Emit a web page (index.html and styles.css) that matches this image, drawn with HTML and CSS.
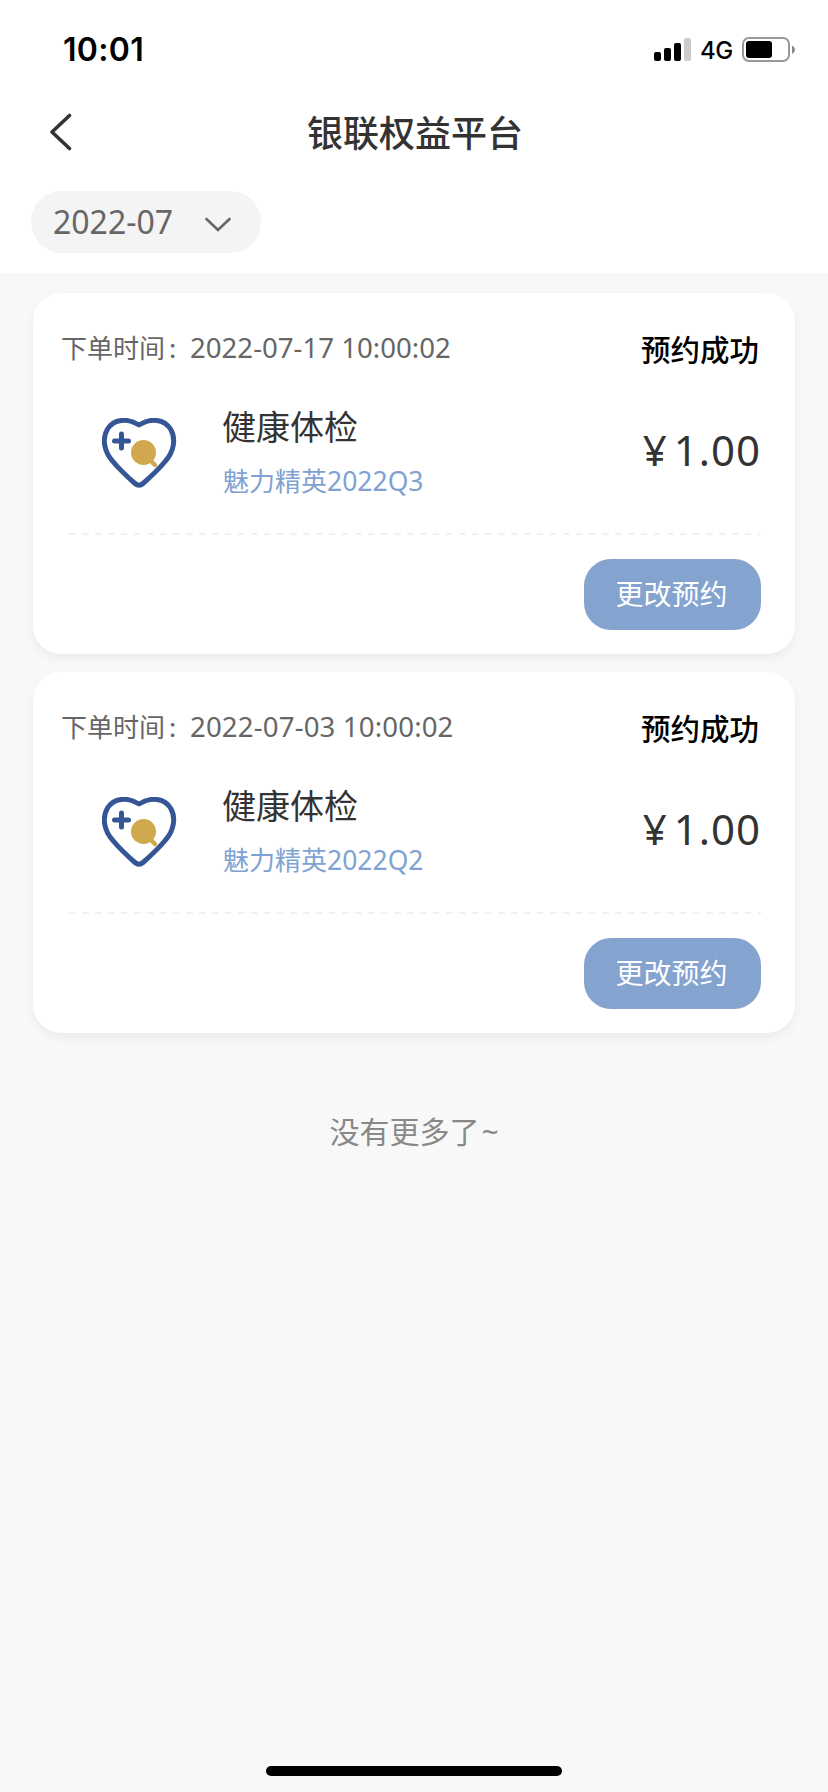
FILE: index.html
```html
<!DOCTYPE html>
<html lang="zh-CN">
<head>
<meta charset="utf-8">
<title>银联权益平台</title>
<link rel="stylesheet" href="styles.css">
</head>
<body>
<div class="screen">
  <header class="top">
    <div class="status">
      <span class="clock">10:01</span>
      <div class="indicators">
        <svg class="signal" width="38" height="24" viewBox="0 0 38 24">
          <rect x="0" y="14" width="7" height="9" rx="2"/>
          <rect x="10" y="10" width="7" height="13" rx="2"/>
          <rect x="20" y="5" width="7" height="18" rx="2"/>
          <rect x="30" y="0" width="7" height="23" rx="2" fill="#ccc"/>
        </svg>
        <span class="network">4G</span>
        <svg class="battery" width="54" height="26" viewBox="0 0 54 26">
          <rect x="1" y="1" width="46" height="23" rx="6" fill="none" stroke="#999" stroke-width="2"/>
          <rect x="4" y="4" width="26" height="17" rx="3"/>
          <path d="M50 8.500q3 1.500 3 4.200t-3 4.300z" fill="#888"/>
        </svg>
      </div>
    </div>
    <nav class="nav">
      <svg class="back" width="24" height="38" viewBox="0 0 24 38"><path d="M20.500 2.500 3 19l17.500 16.500" fill="none" stroke="#333" stroke-width="3.600" stroke-linecap="round" stroke-linejoin="round"/></svg>
      <h1 class="title">银联权益平台</h1>
    </nav>
    <div class="filter">
      <span class="month">2022-07</span>
      <svg class="chevron" width="26" height="16" viewBox="0 0 26 16"><path d="M1.500 2 13 13 24.500 2" fill="none" stroke="#666" stroke-width="2.600" stroke-linecap="round"/></svg>
    </div>
  </header>
  <main class="list">
    <article class="card">
      <div class="card-head">
        <p class="time"><span class="label">下单时间<span class="colon">:</span></span><span class="stamp">2022-07-17 10:00:02</span></p>
        <span class="state">预约成功</span>
      </div>
      <div class="card-body">
        <svg class="logo" width="76" height="72" viewBox="0 0 76 72">
          <path d="M37 7C49-.5 62 1 68.500 11c6 10 3 23-5 32C56.500 51.500 49 58.500 41 65.500q-4 3.500-8 0C25 58.500 17.500 51.500 10.500 43c-8-9-11-22-5-32C12 1 25-.5 37 7Z" fill="none" stroke="#345694" stroke-width="5" stroke-linejoin="round"/>
          <path d="M19.500 16v14M12.500 23h14" stroke="#345694" stroke-width="5" stroke-linecap="round"/>
          <circle cx="41.500" cy="34.500" r="12.500" fill="#d0a84d"/>
          <path d="m48 42 5 5" stroke="#d0a84d" stroke-width="4.500" stroke-linecap="round"/>
        </svg>
        <div class="info">
          <h2 class="name">健康体检</h2>
          <p class="plan">魅力精英<span class="code">2022Q3</span></p>
        </div>
        <p class="price"><span class="yen">¥</span>1.00</p>
      </div>
      <svg class="rule" width="692" height="2" viewBox="0 0 692 2"><path d="M0 1h692" stroke="#f1f1f1" stroke-width="2" stroke-dasharray="6.500 6.500"/></svg>
      <button class="change">更改预约</button>
    </article>
    <article class="card">
      <div class="card-head">
        <p class="time"><span class="label">下单时间<span class="colon">:</span></span><span class="stamp wide">2022-07-03 10:00:02</span></p>
        <span class="state">预约成功</span>
      </div>
      <div class="card-body">
        <svg class="logo" width="76" height="72" viewBox="0 0 76 72">
          <path d="M37 7C49-.5 62 1 68.500 11c6 10 3 23-5 32C56.500 51.500 49 58.500 41 65.500q-4 3.500-8 0C25 58.500 17.500 51.500 10.500 43c-8-9-11-22-5-32C12 1 25-.5 37 7Z" fill="none" stroke="#345694" stroke-width="5" stroke-linejoin="round"/>
          <path d="M19.500 16v14M12.500 23h14" stroke="#345694" stroke-width="5" stroke-linecap="round"/>
          <circle cx="41.500" cy="34.500" r="12.500" fill="#d0a84d"/>
          <path d="m48 42 5 5" stroke="#d0a84d" stroke-width="4.500" stroke-linecap="round"/>
        </svg>
        <div class="info">
          <h2 class="name">健康体检</h2>
          <p class="plan">魅力精英<span class="code">2022Q2</span></p>
        </div>
        <p class="price"><span class="yen">¥</span>1.00</p>
      </div>
      <svg class="rule" width="692" height="2" viewBox="0 0 692 2"><path d="M0 1h692" stroke="#f1f1f1" stroke-width="2" stroke-dasharray="6.500 6.500"/></svg>
      <button class="change">更改预约</button>
    </article>
    <p class="end">没有更多了<span class="tilde">~</span></p>
  </main>
  <div class="home"></div>
</div>
</body>
</html>
```
FILE: styles.css
```css
* { box-sizing: border-box; }
body, h1, h2, p { margin: 0; }
body {
  background: #f8f8f8;
  font-family: "Noto Sans", "Noto Sans CJK SC", sans-serif;
  color: #333;
}
.screen { display: flex; flex-direction: column; width: 828px; height: 1792px; }
.top { height: 273px; background: #fff; }
.status {
  display: flex; justify-content: space-between; align-items: center;
  height: 99px; padding: 0 33px 0 62px;
}
.clock { font: 600 32px/40px Inter, sans-serif; color: #000; letter-spacing: 0.300px; padding: 1px 0 0 1px; }
.indicators { display: flex; align-items: center; height: 26px; margin-right: -1px; }
.network { margin: 2px 0 0 8px; width: 34px; font: 500 24px/26px Inter, sans-serif; color: #000; letter-spacing: -0.500px; }
.battery { margin-left: 8px; }
.nav { display: flex; align-items: center; height: 66px; padding: 0 48px; }
.back { flex: none; margin-left: 1px; }
.title {
  flex: 1; padding: 0 24px 3px 1px; text-align: center;
  font: 500 36px/50px "Noto Sans CJK SC", sans-serif;
}
.filter {
  display: flex; align-items: center; gap: 32px;
  width: 230px; height: 62px; margin: 26px 0 0 31px; padding-left: 22px;
  border-radius: 31px; background: #f4f4f4; color: #666;
}
.month { font-size: 32px; line-height: 44px; width: 121px; }
.chevron { margin: 5px 0 0 -1px; }
.list { flex: 1; display: flex; flex-direction: column; gap: 18px; padding: 20px 33px 0; }
.card {
  display: flex; flex-direction: column;
  height: 361px; padding: 32px 34px 23px 28px;
  border-radius: 28px; background: #fff;
  box-shadow: 0 5px 10px rgba(0, 0, 0, .05);
}
.card-head { display: flex; justify-content: space-between; height: 50px; }
.time { display: flex; height: 46px; align-items: center; color: #666; margin-top: -1px; }
.label { font: 400 26px/46px "Noto Sans CJK SC", sans-serif; width: 129px; white-space: nowrap; }
.colon { margin-left: 4px; }
.stamp { font-size: 27.600px; line-height: 46px; }
.wide { letter-spacing: 0.150px; }
.state { font: 500 29.500px/50px "Noto Sans CJK SC", sans-serif; color: #000; margin: -2px 2px 0 0; }
.card-body { display: flex; height: 159px; padding: 43px 0 0 41px; }
.logo { flex: none; }
.info { margin: -17px 0 0 44px; flex: 1; }
.name { font: 400 34px/50px "Noto Sans CJK SC", sans-serif; }
.plan { margin: 6px 0 0 1px; font: 400 26px/46px "Noto Sans CJK SC", sans-serif; color: #80a2d2; }
.code { font-family: "Noto Sans", sans-serif; font-size: 26.500px; }
.price { font-size: 42px; line-height: 60px; letter-spacing: 1px; margin: 2px 0 0; }
.yen { margin-right: 6px; }
.rule { flex: none; align-self: flex-end; margin-top: -1px; }
.change {
  align-self: flex-end; width: 177px; height: 71px; margin-top: 24px;
  padding: 0 2px 4px 0; border: 0; border-radius: 27px;
  background: #84a3cf; color: #fff;
  font: 400 28px/40px "Noto Sans CJK SC", sans-serif;
}
.end { margin-top: 55px; text-align: center; font: 400 30px/48px "Noto Sans CJK SC", sans-serif; color: #888; }
.tilde { font-family: "Noto Sans", sans-serif; margin-left: 2px; }
.home { align-self: center; width: 296px; height: 10px; margin-bottom: 16px; border-radius: 5px; background: #000; }
```
